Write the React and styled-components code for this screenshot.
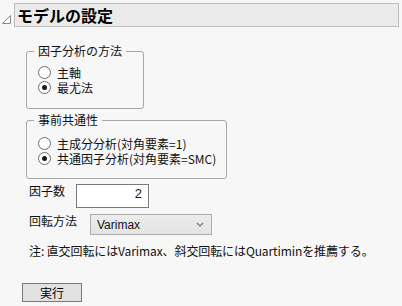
import styled, { createGlobalStyle } from "styled-components";

const Global = createGlobalStyle`
  body {
    margin: 0;
    background: #f7f7f7;
    font-family: "Noto Sans CJK JP", "Noto Sans", sans-serif;
    font-size: 12px;
    color: #111;
  }
`;

const Page = styled.div`
  width: 402px;
  height: 306px;
  padding-top: 3px;
  box-sizing: border-box;
  overflow: hidden;
`;

const HeaderRow = styled.div`
  display: flex;
  align-items: flex-start;
  margin-right: 3px;
`;

const Toggle = styled.svg`
  width: 14px;
  height: 24px;
  flex: none;
`;

const HeaderBox = styled.div`
  flex: 1;
  height: 24px;
  box-sizing: border-box;
  background: #ebebeb;
  border: 1px solid #bdbdbd;
  padding-left: 2px;
  font-size: 16px;
  font-weight: bold;
  line-height: 22px;
  color: #000;
`;

const Body = styled.div`
  padding-left: 26px;
  display: flex;
  flex-direction: column;
  align-items: flex-start;
`;

const Group = styled.fieldset`
  margin: ${(p) => p.$top}px 0 0 0;
  width: ${(p) => p.$w}px;
  height: ${(p) => p.$h}px;
  box-sizing: border-box;
  border: 1px solid #a6a6a6;
  border-radius: 3px;
  padding: ${(p) => p.$pad}px 0 0 11px;
  min-inline-size: 0;
`;

const Legend = styled.legend`
  padding: 0 4px;
  margin-left: -4px;
  font-size: 12px;
  line-height: 14px;
`;

const RadioRow = styled.div`
  display: flex;
  align-items: center;
  height: 15px;
  line-height: 15px;
  gap: 6px;
  white-space: nowrap;
`;

const Circle = styled.span`
  width: 11px;
  height: 11px;
  flex: none;
  border-radius: 50%;
  border: 1px solid #6e6e6e;
  background: #fff;
  display: flex;
  align-items: center;
  justify-content: center;
  &::after {
    content: "";
    width: 5px;
    height: 5px;
    border-radius: 50%;
    background: ${(p) => (p.$on ? "#1a1a1a" : "transparent")};
  }
`;

const FieldRow = styled.div`
  display: flex;
  align-items: flex-start;
  margin-top: ${(p) => p.$top}px;
  padding-left: 3px;
`;

const Label = styled.span`
  width: ${(p) => p.$w}px;
  line-height: 14px;
`;

const NumberBox = styled.div`
  width: 73px;
  height: 24px;
  box-sizing: border-box;
  background: #fff;
  border: 1px solid #7a7a7a;
  text-align: right;
  padding-right: 6px;
  line-height: 18px;
  font-family: "Liberation Sans", Arial, sans-serif;
  font-size: 13px;
`;

const Select = styled.div`
  width: 122px;
  height: 21px;
  box-sizing: border-box;
  background: linear-gradient(#ececec, #e4e4e4);
  border: 1px solid #adadad;
  display: flex;
  align-items: center;
  justify-content: space-between;
  padding: 0 7px 0 6px;
  font-family: "Liberation Sans", Arial, sans-serif;
  font-size: 12px;
`;

const Note = styled.div`
  margin-top: 9px;
  padding-left: 3px;
  line-height: 14px;
  letter-spacing: -0.1px;
`;

const RunButton = styled.button`
  margin: 25px 0 0 22px;
  width: 60px;
  height: 19px;
  box-sizing: border-box;
  background: #e1e1e1;
  border: 1px solid #7a7a7a;
  font-family: inherit;
  font-size: 12px;
  line-height: 15px;
  padding: 0;
  color: #000;
`;

export default function App() {
  return (
    <Page>
      <Global />
      <HeaderRow>
        <Toggle viewBox="0 0 14 24">
          <path d="M2.5 20.5 L10.5 20.5 L10.5 12.5 Z" fill="#fff" stroke="#8a8a8a" strokeWidth="1" />
        </Toggle>
        <HeaderBox>モデルの設定</HeaderBox>
      </HeaderRow>
      <Body>
        <Group $top={17} $w={118} $h={65} $pad={7}>
          <Legend>因子分析の方法</Legend>
          <RadioRow><Circle />主軸</RadioRow>
          <RadioRow><Circle $on />最尤法</RadioRow>
        </Group>
        <Group $top={4} $w={201} $h={66} $pad={9}>
          <Legend>事前共通性</Legend>
          <RadioRow><Circle />主成分分析(対角要素=1)</RadioRow>
          <RadioRow><Circle $on />共通因子分析(対角要素=SMC)</RadioRow>
        </Group>
        <FieldRow $top={5}>
          <Label $w={47}>因子数</Label>
          <NumberBox>2</NumberBox>
        </FieldRow>
        <FieldRow $top={6}>
          <Label $w={61}>回転方法</Label>
          <Select>
            <span>Varimax</span>
            <svg width="8" height="5" viewBox="0 0 8 5">
              <path d="M1 1 L4 4 L7 1" fill="none" stroke="#777" strokeWidth="1.2" />
            </svg>
          </Select>
        </FieldRow>
        <Note>注: 直交回転にはVarimax、斜交回転にはQuartiminを推薦する。</Note>
      </Body>
      <RunButton>実行</RunButton>
    </Page>
  );
}
